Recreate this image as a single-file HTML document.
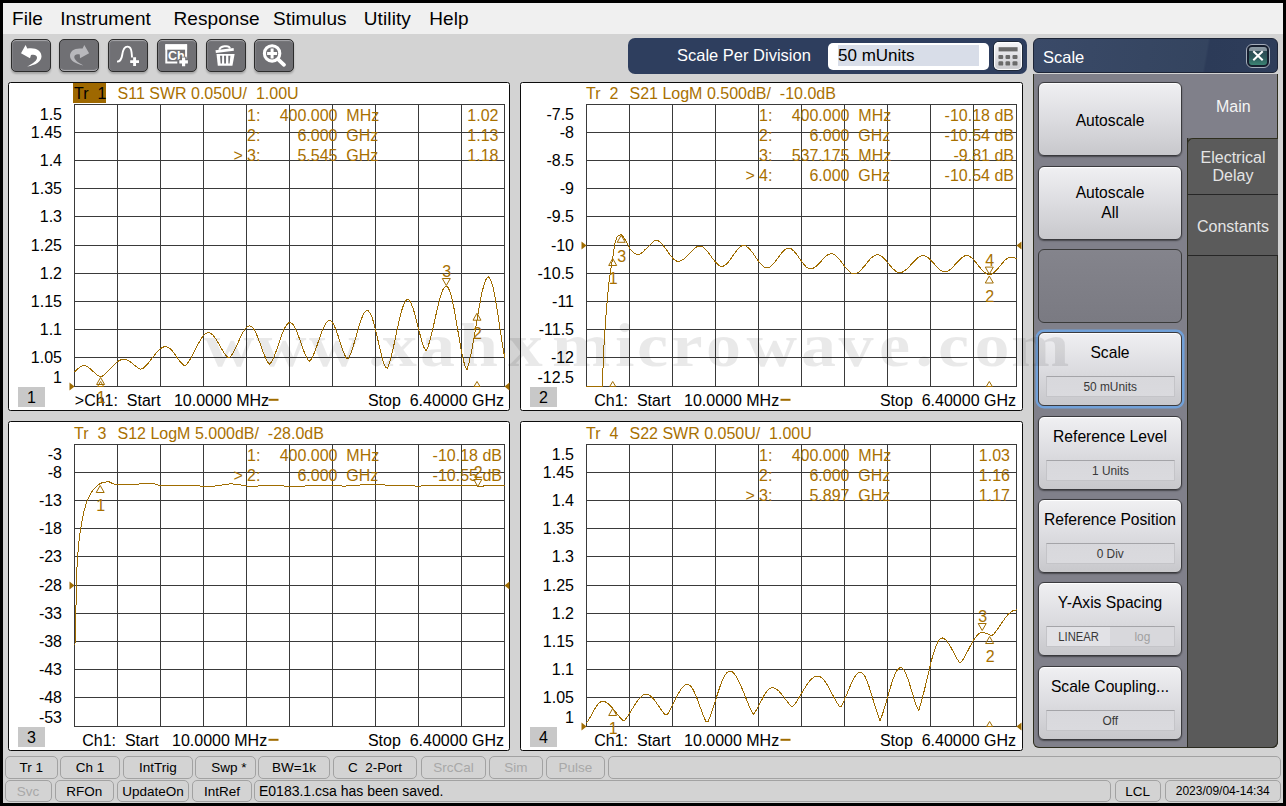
<!DOCTYPE html>
<html><head><meta charset="utf-8"><style>
*{margin:0;padding:0;box-sizing:border-box}
html,body{width:1286px;height:806px;overflow:hidden;background:#000;font-family:"Liberation Sans", sans-serif}
#app{position:absolute;left:3px;top:3px;width:1280px;height:800px;background:#d3d3d3;overflow:hidden}
#menu{position:absolute;left:0;top:0;width:1280px;height:31px;background:#f0f0f0}
#menu span{position:absolute;top:5px;font-size:19px;color:#000;letter-spacing:0.1px}
.tb{position:absolute;top:36px;width:40px;height:33px;border:1.5px solid #2c2c2c;border-radius:5px;background:#707074;box-shadow:inset 0 2px 1px -1px #a8a8ac,inset 1px 0 1px -0.5px #909094,0 2px 2px rgba(0,0,0,0.22)}
.tb.dis{box-shadow:inset 0 -2px 1px -1px #b0b0b4,0 2px 2px rgba(0,0,0,0.22)}
.tb svg{position:absolute;left:-1.5px;top:-1.5px}
svg text{font-family:"Liberation Sans", sans-serif}
.t16{font-size:16px;fill:#000}
.t16g{font-size:16px;fill:#a87000}
#spd{position:absolute;left:625px;top:35px;width:399px;height:36px;background:#2e3e5e;border-radius:7px}
#spd .lab{position:absolute;left:49px;top:8px;font-size:16.5px;color:#fff}
#spd .inp{position:absolute;left:200px;top:5px;width:161px;height:27px;background:#fff;border-radius:5px}
#spd .sel{position:absolute;left:10px;top:2px;width:141px;height:21px;background:#d8dde8;font-size:17px;color:#000;line-height:21px;padding-left:0px}
#spd .calc{position:absolute;left:366px;top:4px;width:28px;height:28px;border-radius:5px;background:linear-gradient(#f6f6f8,#dcdce0 60%,#c8c8cc);box-shadow:0 0 0 1px #1e2838,inset 0 0 1px 1px #fff}
#rp{position:absolute;left:1030px;top:35px;width:245px;height:710px}
#rp .hdr{position:absolute;left:0;top:0;width:245px;height:35px;background:linear-gradient(100deg,#3a4a68 0%,#34445f 70%,#2c3b58 71%,#2e3d5a 100%);border:1px solid #1c2436;border-radius:6px 6px 5px 5px}
#rp .hdr .t{position:absolute;left:9px;top:9px;font-size:16.5px;color:#fff}
#rp .x{position:absolute;left:212px;top:5px;width:24px;height:24px;border:1px solid #a4acba;border-radius:6px;background:#161e2e}
#rp .x .in{position:absolute;left:2px;top:2px;width:18px;height:18px;border-radius:3px;background:linear-gradient(#8c9aa4 0%,#7e8e98 24%,#2c4c54 25%,#2e5a5c 60%,#3c8474 100%)}
#rp .body{position:absolute;left:0;top:36px;width:245px;height:674px;background:#80808a;border:1px solid #2e2e1e;border-top:none;border-radius:0 0 6px 6px}
#rp .tabcol{position:absolute;left:154px;top:36px;width:91px;height:674px;background:#5a5a5a;border:1px solid #2a2a20;border-top:none;border-radius:0 0 6px 0}
#rp .main{position:absolute;left:154px;top:36px;width:91px;height:64px;background:#80808a;border-right:1px solid #2e2e1e}
#rp .tab{position:absolute;left:154px;width:91px;background:#5b5b5b;color:#e4e4e4;font-size:16px;text-align:center;border-bottom:1px solid #262626}
.rb{position:absolute;left:7px;width:144px;height:74px;border:1px solid #3a3a3e;border-radius:6px;background:linear-gradient(#f0f0f2,#dedee2 45%,#c8c8cc);box-shadow:inset 0 1px 1px #fff,0 1px 1.5px rgba(0,0,0,0.45);color:#000;text-align:center}
.rb.empty{background:linear-gradient(#84848c,#7a7a82);border-color:#3a3a3a;box-shadow:none}
.rb.focus{box-shadow:0 0 0 2.5px #70a0d8,inset 0 1px 1px #fff}
.rb .lab1{position:absolute;left:-20px;right:-20px;top:27.5px;font-size:17px;white-space:nowrap;transform:scaleX(0.92)}
.rb .lab2{position:absolute;left:0;right:0;top:16px;font-size:17px;line-height:20px;transform:scaleX(0.92)}
.rb .labt{position:absolute;left:-20px;right:-20px;top:10px;font-size:17px;white-space:nowrap;transform:scaleX(0.92)}
.rb .sub{position:absolute;left:7px;top:43px;width:129px;height:21px;border:1px solid #c4c4c8;border-top-color:#a4a4a8;background:linear-gradient(#d8d8dc,#dadade);font-size:12.5px;color:#383838;line-height:21px}
.rb .sub .tx{display:inline-block;transform:scaleX(0.95)}
.rb .sub.lin .l1{position:absolute;left:0;top:0;width:63px;height:19px;background:#e2e2e6;line-height:20px;transform:none}
.rb .sub.lin .l2{position:absolute;left:63px;top:0;width:64px;height:19px;color:#a0a0a0;background:#d8d8dc;line-height:20px}
.sb{position:absolute;border:1px solid #a2a2a2;border-radius:5px;font-size:13.5px;text-align:center;line-height:21px;color:#000;background:#d3d3d3}
.sb.dis{color:#a8a8a8}
.sb.msg{text-align:left;padding-left:4px;font-size:14px}
.sb.dt{font-size:12px}
#wm{position:absolute;left:205px;top:298px;font-family:"Liberation Serif",serif;font-weight:bold;font-size:76px;letter-spacing:1px;color:rgba(0,0,0,0.1);white-space:nowrap;pointer-events:none}
</style></head><body>
<div id="app">
<div id="menu"><span style="left:9px">File</span><span style="left:57.2px">Instrument</span><span style="left:170.4px">Response</span><span style="left:270px">Stimulus</span><span style="left:360.8px">Utility</span><span style="left:426.2px">Help</span></div>
<div class="tb" style="left:8px"><svg width="40" height="33" viewBox="0 0 40 33"><path d="M10,14.2 L14.6,6 L16.3,9.6 C24.5,8.2 30.6,11.5 30.5,17.6 C30.4,22.8 24.5,26.3 16.2,27.6 C21.8,24.6 26.2,21.8 26,18.6 C25.8,16 23,15.2 20,16.1 L19,19.2 Z" fill="#fff"/></svg></div><div class="tb dis" style="left:56px"><svg width="40" height="33" viewBox="0 0 40 33"><path d="M30.1,14.2 L25.3,6 L23.6,9.6 C15.5,8.6 11,12 11,16.8 C11,21.5 16,24.8 24.4,26.4 C18.8,23.5 15.2,20.8 15.3,18 C15.4,15.5 18,14.8 20.8,15.6 L21,19.2 Z" fill="#b8b8bc"/></svg></div><div class="tb" style="left:105px"><svg width="40" height="33" viewBox="0 0 40 33"><path d="M9,22.6 C12.5,22.6 13.6,20.5 14.2,16 C14.8,11.5 15.6,7.6 19.4,7.6 C23,7.6 23.6,11 24,18.5" stroke="#fff" stroke-width="1.9" fill="none"/><path d="M26.6,18.2 V27 M22.2,22.6 H31" stroke="#fff" stroke-width="2.9"/></svg></div><div class="tb" style="left:154px"><svg width="40" height="33" viewBox="0 0 40 33"><path d="M8.3,5.1 H30.1 V10.7 H8.3 Z" fill="#fff"/><path d="M9.3,5.5 V23.6 H20.3 M29.1,5.5 V19.4" stroke="#fff" stroke-width="2" fill="none"/><text x="11" y="20.8" style="font-family:'Liberation Sans',sans-serif;font-weight:bold;font-size:12.5px;-webkit-font-smoothing:antialiased" fill="#fff">Ch</text><path d="M26.6,17.8 V28 M21.5,22.9 H31.7" stroke="#6f6f73" stroke-width="6"/><path d="M26.6,18.6 V27.2 M22.3,22.9 H30.9" stroke="#fff" stroke-width="3.2"/></svg></div><div class="tb" style="left:202.5px"><svg width="40" height="33" viewBox="0 0 40 33"><path d="M10.5,11.3 L28.6,9.1 L28.9,11.7 L10.9,13.9 Z" fill="#fff"/><path d="M14.4,10.8 C14.8,7.2 24,5.6 25,9.4" stroke="#fff" stroke-width="2" fill="none"/><path d="M11.5,15.1 H29.6 L27.4,26.8 H12.8 Z" fill="#fff"/><path d="M15,16.8 H17.2 L17,24.6 H15.6 Z M19,16.8 H21.1 L21,24.6 H19.2 Z M23.3,16.8 H25.4 L24.6,24.6 H23.4 Z" fill="#6f6f73"/></svg></div><div class="tb" style="left:251px"><svg width="40" height="33" viewBox="0 0 40 33"><circle cx="18.1" cy="14.4" r="7.7" fill="none" stroke="#fff" stroke-width="3.1"/><path d="M18.1,9.4 V19.4 M13.1,14.4 H23.1" stroke="#fff" stroke-width="3"/><path d="M24.4,20.6 L30,25.8" stroke="#fff" stroke-width="3.8" stroke-linecap="round"/></svg></div>
<div id="spd"><div class="lab">Scale Per Division</div><div class="inp"><div class="sel">50 mUnits</div></div><div class="calc"><svg width="28" height="28" viewBox="0 0 28 28"><rect x="4.6" y="5.2" width="19" height="4.2" fill="#6a6a6a"/><g fill="#6a6a6a"><rect x="4.4" y="13.1" width="4.8" height="3.9" rx="1"/><rect x="11.5" y="13.1" width="4.6" height="3.9" rx="1"/><rect x="18.5" y="13.1" width="5" height="3.9" rx="1"/><rect x="4.4" y="19.2" width="4.8" height="4.4" rx="1.2"/><rect x="11.5" y="19.2" width="4.6" height="4.4" rx="1.2"/><rect x="18.5" y="19.2" width="5" height="4.4" rx="1.2"/></g></svg></div></div>
<div id="rp">
<div class="body"></div>
<div class="tabcol"></div>
<div class="main"></div>
<div class="tab" style="top:100px;height:57px;border-radius:6px 0 0 0;border-left:1px solid #2e2e1e;border-top:1px solid #2e2e1e;padding-top:10px;line-height:18px">Electrical<br>Delay</div>
<div class="tab" style="top:157px;height:61px;line-height:64px;border-left:1px solid #2e2e1e">Constants</div>
<div class="hdr"><div class="t">Scale</div><div class="x"><div class="in"><svg width="18" height="18" viewBox="0 0 18 18" style="position:absolute;left:0;top:0"><path d="M4.3,4.3 L13.7,13.3 M13.7,4.3 L4.3,13.3" stroke="#fff" stroke-width="2"/></svg></div></div></div>
<div style="position:absolute;left:1186px;top:68px;font-size:16px;color:#f4f4f4"></div>
</div>
<div style="position:absolute;left:1213px;top:95px;font-size:16px;color:#f4f4f4">Main</div>
<div style="position:absolute;left:0;top:0" id="btnwrap">
</div>
<div class="sb" style="left:2px;top:753px;width:52.6px;height:23px">Tr 1</div>
<div class="sb" style="left:57px;top:753px;width:60px;height:23px">Ch 1</div>
<div class="sb" style="left:120px;top:753px;width:69.6px;height:23px">IntTrig</div>
<div class="sb" style="left:192px;top:753px;width:60.5px;height:23px">&nbsp; Swp *</div>
<div class="sb" style="left:255px;top:753px;width:72px;height:23px">BW=1k</div>
<div class="sb" style="left:330px;top:753px;width:84px;height:23px">C&nbsp; 2-Port</div>
<div class="sb dis" style="left:417.7px;top:753px;width:65.69999999999999px;height:23px">SrcCal</div>
<div class="sb dis" style="left:486px;top:753px;width:53.60000000000002px;height:23px">Sim</div>
<div class="sb dis" style="left:542.6px;top:753px;width:59.69999999999993px;height:23px">Pulse</div>
<div class="sb" style="left:605px;top:753px;width:673.3px;height:23px"></div>
<div class="sb dis" style="left:1.5px;top:777px;width:47.0px;height:22px">Svc</div>
<div class="sb" style="left:51.6px;top:777px;width:59.4px;height:22px">RFOn</div>
<div class="sb" style="left:114px;top:777px;width:72px;height:22px">UpdateOn</div>
<div class="sb" style="left:189px;top:777px;width:60px;height:22px">IntRef</div>
<div class="sb msg" style="left:251px;top:777px;width:857px;height:22px">E0183.1.csa has been saved.</div>
<div class="sb" style="left:1111.5px;top:777px;width:46.5px;height:22px">LCL</div>
<div class="sb dt" style="left:1161.5px;top:777px;width:116.5px;height:22px">2023/09/04-14:34</div>
</div>
<svg style="position:absolute;left:0;top:0" width="1286" height="806" viewBox="0 0 1286 806">
<rect x="8.5" y="82.5" width="501" height="328" rx="2" fill="#fff" stroke="#0c0c0c" stroke-width="1"/>
<path d="M74.5,104 V387 M117.5,104 V387 M160.5,104 V387 M203.5,104 V387 M246.5,104 V387 M289.5,104 V387 M332.5,104 V387 M375.5,104 V387 M418.5,104 V387 M461.5,104 V387 M504.5,104 V387 M74,104.5 H505 M74,132.5 H505 M74,160.5 H505 M74,188.5 H505 M74,216.5 H505 M74,245.5 H505 M74,273.5 H505 M74,301.5 H505 M74,329.5 H505 M74,357.5 H505 M74,386.5 H505" stroke="#3a3a3a" stroke-width="1" fill="none"/>
<text x="62" y="119.8" text-anchor="end" class="t16">1.5</text>
<text x="62" y="137.5" text-anchor="end" class="t16">1.45</text>
<text x="62" y="165.5" text-anchor="end" class="t16">1.4</text>
<text x="62" y="193.5" text-anchor="end" class="t16">1.35</text>
<text x="62" y="221.5" text-anchor="end" class="t16">1.3</text>
<text x="62" y="250.5" text-anchor="end" class="t16">1.25</text>
<text x="62" y="278.5" text-anchor="end" class="t16">1.2</text>
<text x="62" y="306.5" text-anchor="end" class="t16">1.15</text>
<text x="62" y="334.5" text-anchor="end" class="t16">1.1</text>
<text x="62" y="362.5" text-anchor="end" class="t16">1.05</text>
<text x="62" y="382.8" text-anchor="end" class="t16">1</text>
<rect x="73" y="83" width="33" height="20" fill="#9e6800"/>
<text x="74" y="99" class="t16" fill="#000" xml:space="preserve">Tr  1</text>
<text x="117.5" y="99" class="t16g" xml:space="preserve">S11 SWR 0.050U/  1.00U</text>
<text x="247" y="120.5" class="t16g">1:</text>
<text x="337.5" y="120.5" text-anchor="end" class="t16g">400.000</text>
<text x="346.3" y="120.5" class="t16g">MHz</text>
<text x="498.5" y="120.5" text-anchor="end" class="t16g" xml:space="preserve">1.02</text>
<text x="247" y="140.5" class="t16g">2:</text>
<text x="337.5" y="140.5" text-anchor="end" class="t16g">6.000</text>
<text x="346.3" y="140.5" class="t16g">GHz</text>
<text x="498.5" y="140.5" text-anchor="end" class="t16g" xml:space="preserve">1.13</text>
<text x="233.5" y="160.5" class="t16g">&gt;</text>
<text x="247" y="160.5" class="t16g">3:</text>
<text x="337.5" y="160.5" text-anchor="end" class="t16g">5.545</text>
<text x="346.3" y="160.5" class="t16g">GHz</text>
<text x="498.5" y="160.5" text-anchor="end" class="t16g" xml:space="preserve">1.18</text>
<text x="74.8" y="405.6" class="t16" xml:space="preserve">&gt;Ch1:  Start   10.0000 MHz</text>
<rect x="268.5" y="398.8" width="10" height="2" fill="#a06c00"/>
<text x="504" y="405.6" text-anchor="end" class="t16" xml:space="preserve">Stop  6.40000 GHz</text>
<rect x="18" y="387" width="27" height="20" fill="#c8c8c8"/>
<text x="31.5" y="403" text-anchor="middle" class="t16">1</text>
<clipPath id="c1"><rect x="74" y="104" width="431" height="283"/></clipPath>
<path d="M73.5,372.3 L75.7,370.9 L77.8,368.9 L80.0,367.0 L82.1,365.8 L84.3,365.5 L86.4,366.2 L88.6,367.4 L90.7,369.2 L92.9,371.2 L95.0,373.2 L97.2,375.0 L99.3,376.4 L101.5,376.6 L103.6,375.3 L105.8,373.5 L107.9,371.4 L110.1,369.1 L112.2,366.8 L114.4,364.5 L116.5,362.5 L118.7,360.9 L120.8,359.8 L123.0,359.2 L125.1,359.3 L127.3,360.0 L129.4,361.3 L131.6,362.9 L133.7,364.6 L135.9,366.4 L138.0,367.9 L140.2,369.1 L142.3,368.9 L144.5,367.2 L146.6,365.1 L148.8,362.5 L150.9,359.8 L153.1,356.9 L155.2,354.1 L157.4,351.6 L159.5,349.5 L161.7,347.8 L163.8,346.9 L166.0,346.6 L168.1,347.2 L170.3,348.8 L172.4,351.1 L174.6,353.9 L176.7,357.0 L178.9,360.0 L181.0,362.7 L183.2,364.9 L185.3,365.6 L187.5,363.3 L189.6,360.2 L191.8,356.5 L193.9,352.3 L196.1,348.0 L198.2,343.8 L200.4,340.0 L202.5,336.8 L204.7,334.4 L206.8,333.0 L209.0,332.7 L211.1,333.6 L213.3,335.5 L215.4,338.3 L217.6,341.8 L219.7,345.6 L221.9,349.4 L224.0,352.9 L226.2,355.9 L228.3,358.0 L230.5,356.9 L232.6,353.7 L234.8,349.7 L236.9,345.1 L239.1,340.3 L241.2,335.7 L243.4,331.6 L245.5,328.4 L247.7,326.4 L249.8,325.8 L252.0,326.8 L254.1,329.5 L256.3,333.8 L258.4,339.1 L260.6,344.9 L262.7,350.9 L264.9,356.3 L267.0,360.9 L269.2,364.2 L271.3,362.3 L273.5,358.0 L275.6,352.6 L277.8,346.4 L279.9,340.0 L282.1,334.0 L284.2,328.8 L286.4,325.0 L288.5,322.8 L290.7,322.5 L292.8,324.2 L295.0,327.6 L297.1,332.4 L299.3,338.2 L301.4,344.4 L303.6,350.4 L305.7,355.7 L307.9,359.9 L310.0,361.3 L312.2,357.7 L314.3,352.8 L316.5,347.1 L318.6,340.8 L320.8,334.6 L322.9,329.0 L325.1,324.5 L327.2,321.6 L329.4,320.4 L331.5,321.3 L333.7,324.4 L335.8,329.3 L338.0,335.5 L340.1,342.2 L342.3,348.8 L344.4,354.4 L346.6,358.7 L348.7,358.1 L350.9,353.2 L353.0,346.9 L355.2,339.6 L357.3,332.0 L359.5,324.6 L361.6,318.3 L363.8,313.6 L365.9,310.9 L368.1,310.6 L370.2,313.1 L372.4,318.3 L374.5,325.7 L376.7,334.6 L378.8,344.0 L381.0,353.1 L383.1,361.1 L385.3,367.2 L387.4,368.4 L389.6,362.4 L391.7,354.5 L393.9,345.1 L396.0,334.9 L398.2,324.7 L400.3,315.4 L402.5,307.8 L404.6,302.4 L406.8,299.7 L408.9,300.0 L411.1,303.2 L413.2,308.8 L415.4,316.3 L417.5,324.8 L419.7,333.4 L421.8,341.2 L424.0,347.5 L426.1,351.1 L428.3,346.0 L430.4,338.8 L432.6,330.0 L434.7,320.4 L436.9,310.6 L439.0,301.6 L441.2,294.1 L443.3,288.8 L445.5,286.2 L447.6,286.7 L449.8,290.9 L451.9,298.5 L454.1,308.9 L456.2,321.0 L458.4,333.8 L460.5,346.2 L462.7,357.1 L464.8,365.7 L467.0,369.5 L469.1,362.4 L471.3,352.9 L473.4,341.3 L475.6,328.6 L477.7,315.5 L479.9,303.1 L482.0,292.3 L484.2,284.0 L486.3,278.7 L488.5,277.0 L490.6,279.4 L492.8,286.0 L494.9,296.3 L497.1,309.2 L499.2,323.5 L501.4,337.9 L503.5,351.0 L505.7,361.8" clip-path="url(#c1)" stroke="#a06c00" stroke-width="1" fill="none" shape-rendering="crispEdges"/>
<path d="M100.6,377.5 L104.6,384.5 L96.6,384.5 Z" fill="none" stroke="#a06c00" stroke-width="1"/>
<text x="101.1" y="403" text-anchor="middle" class="t16g">1</text>
<path d="M446.3,285.5 L450.3,278.5 L442.3,278.5 Z" fill="none" stroke="#a06c00" stroke-width="1"/>
<text x="446.8" y="277" text-anchor="middle" class="t16g">3</text>
<path d="M477,313.2 L481,320.2 L473,320.2 Z" fill="none" stroke="#a06c00" stroke-width="1"/>
<text x="477.5" y="338.7" text-anchor="middle" class="t16g">2</text>
<path d="M100.6,381.5 L103.6,386.5 L97.6,386.5 Z" fill="none" stroke="#a06c00" stroke-width="1"/>
<path d="M477,381.5 L480,386.5 L474,386.5 Z" fill="none" stroke="#a06c00" stroke-width="1"/>
<path d="M74.5,386.5 L69.5,382.5 L69.5,390.5 Z" fill="#a06c00"/>
<path d="M504.5,386.5 L509.5,382.5 L509.5,390.5 Z" fill="#a06c00"/>
<rect x="520.5" y="82.5" width="502" height="328" rx="2" fill="#fff" stroke="#0c0c0c" stroke-width="1"/>
<path d="M586.5,104 V387 M629.5,104 V387 M672.5,104 V387 M715.5,104 V387 M758.5,104 V387 M801.5,104 V387 M844.5,104 V387 M887.5,104 V387 M930.5,104 V387 M973.5,104 V387 M1016.5,104 V387 M586,104.5 H1017 M586,132.5 H1017 M586,160.5 H1017 M586,188.5 H1017 M586,216.5 H1017 M586,245.5 H1017 M586,273.5 H1017 M586,301.5 H1017 M586,329.5 H1017 M586,357.5 H1017 M586,386.5 H1017" stroke="#3a3a3a" stroke-width="1" fill="none"/>
<text x="574" y="119.8" text-anchor="end" class="t16">-7.5</text>
<text x="574" y="137.5" text-anchor="end" class="t16">-8</text>
<text x="574" y="165.5" text-anchor="end" class="t16">-8.5</text>
<text x="574" y="193.5" text-anchor="end" class="t16">-9</text>
<text x="574" y="221.5" text-anchor="end" class="t16">-9.5</text>
<text x="574" y="250.5" text-anchor="end" class="t16">-10</text>
<text x="574" y="278.5" text-anchor="end" class="t16">-10.5</text>
<text x="574" y="306.5" text-anchor="end" class="t16">-11</text>
<text x="574" y="334.5" text-anchor="end" class="t16">-11.5</text>
<text x="574" y="362.5" text-anchor="end" class="t16">-12</text>
<text x="574" y="382.8" text-anchor="end" class="t16">-12.5</text>
<text x="586" y="99" class="t16g" xml:space="preserve">Tr  2</text>
<text x="629.5" y="99" class="t16g" xml:space="preserve">S21 LogM 0.500dB/  -10.0dB</text>
<text x="759" y="120.5" class="t16g">1:</text>
<text x="849.5" y="120.5" text-anchor="end" class="t16g">400.000</text>
<text x="858.3" y="120.5" class="t16g">MHz</text>
<text x="1014" y="120.5" text-anchor="end" class="t16g" xml:space="preserve">-10.18 dB</text>
<text x="759" y="140.5" class="t16g">2:</text>
<text x="849.5" y="140.5" text-anchor="end" class="t16g">6.000</text>
<text x="858.3" y="140.5" class="t16g">GHz</text>
<text x="1014" y="140.5" text-anchor="end" class="t16g" xml:space="preserve">-10.54 dB</text>
<text x="759" y="160.5" class="t16g">3:</text>
<text x="849.5" y="160.5" text-anchor="end" class="t16g">537.175</text>
<text x="858.3" y="160.5" class="t16g">MHz</text>
<text x="1014" y="160.5" text-anchor="end" class="t16g" xml:space="preserve">-9.81 dB</text>
<text x="745.5" y="180.5" class="t16g">&gt;</text>
<text x="759" y="180.5" class="t16g">4:</text>
<text x="849.5" y="180.5" text-anchor="end" class="t16g">6.000</text>
<text x="858.3" y="180.5" class="t16g">GHz</text>
<text x="1014" y="180.5" text-anchor="end" class="t16g" xml:space="preserve">-10.54 dB</text>
<text x="594.2" y="405.6" class="t16" xml:space="preserve">Ch1:  Start   10.0000 MHz</text>
<rect x="780.5" y="398.8" width="10" height="2" fill="#a06c00"/>
<text x="1016" y="405.6" text-anchor="end" class="t16" xml:space="preserve">Stop  6.40000 GHz</text>
<rect x="530" y="387" width="27" height="20" fill="#c8c8c8"/>
<text x="543.5" y="403" text-anchor="middle" class="t16">2</text>
<clipPath id="c2"><rect x="586" y="104" width="431" height="283"/></clipPath>
<path d="M585.0,386.0 L587.1,386.0 L589.3,386.0 L591.4,386.0 L593.6,386.0 L595.7,386.0 L597.9,386.0 L600.0,386.0 L602.2,386.0 L604.3,338.2 L606.5,308.9 L608.6,285.5 L610.8,268.9 L612.9,256.3 L615.1,242.1 L617.2,236.6 L619.4,235.1 L621.5,234.9 L623.7,237.3 L625.8,240.7 L628.0,244.9 L630.1,248.8 L632.3,251.2 L634.4,253.2 L636.6,254.5 L638.7,254.7 L640.9,253.6 L643.0,251.8 L645.2,249.5 L647.3,247.5 L649.5,245.5 L651.6,243.2 L653.8,241.2 L655.9,240.3 L658.1,240.7 L660.2,242.2 L662.4,244.4 L664.5,247.1 L666.7,250.1 L668.8,253.2 L671.0,256.1 L673.1,258.6 L675.3,260.4 L677.4,261.4 L679.6,261.3 L681.7,260.4 L683.9,258.9 L686.0,257.0 L688.2,254.8 L690.3,252.5 L692.5,250.3 L694.6,248.4 L696.8,246.9 L698.9,246.1 L701.1,246.1 L703.2,247.2 L705.4,249.1 L707.5,251.6 L709.7,254.4 L711.8,257.4 L714.0,260.3 L716.1,262.8 L718.3,264.9 L720.4,266.1 L722.6,266.4 L724.7,265.5 L726.9,263.7 L729.0,261.2 L731.2,258.3 L733.3,255.2 L735.5,252.1 L737.6,249.4 L739.8,247.2 L741.9,245.8 L744.1,245.4 L746.2,246.2 L748.4,247.8 L750.5,250.1 L752.7,252.9 L754.8,256.0 L757.0,259.1 L759.1,262.0 L761.3,264.6 L763.4,266.6 L765.6,267.8 L767.7,267.9 L769.9,267.0 L772.0,265.3 L774.2,262.9 L776.3,260.1 L778.5,257.1 L780.6,254.2 L782.8,251.6 L784.9,249.6 L787.1,248.3 L789.2,248.0 L791.4,248.9 L793.5,250.7 L795.7,253.1 L797.8,256.0 L800.0,259.1 L802.1,262.1 L804.3,264.9 L806.4,267.1 L808.6,268.5 L810.7,269.0 L812.9,268.4 L815.0,267.1 L817.2,265.3 L819.3,263.1 L821.5,260.8 L823.6,258.4 L825.8,256.4 L827.9,254.8 L830.1,253.8 L832.2,253.7 L834.4,254.5 L836.5,256.2 L838.7,258.5 L840.8,261.1 L843.0,264.0 L845.1,266.9 L847.3,269.5 L849.4,271.7 L851.6,273.3 L853.7,274.0 L855.9,273.7 L858.0,272.6 L860.2,270.8 L862.3,268.5 L864.5,266.0 L866.6,263.3 L868.8,260.7 L870.9,258.3 L873.1,256.4 L875.2,255.2 L877.4,254.7 L879.5,255.2 L881.7,256.4 L883.8,258.3 L886.0,260.6 L888.1,263.2 L890.3,265.7 L892.4,268.2 L894.6,270.2 L896.7,271.8 L898.9,272.6 L901.0,272.6 L903.2,271.7 L905.3,270.3 L907.5,268.4 L909.6,266.2 L911.8,263.8 L913.9,261.5 L916.1,259.4 L918.2,257.5 L920.4,256.2 L922.5,255.6 L924.7,255.7 L926.8,256.7 L929.0,258.3 L931.1,260.4 L933.3,262.8 L935.4,265.2 L937.6,267.6 L939.7,269.6 L941.9,271.1 L944.0,271.9 L946.2,271.9 L948.3,270.9 L950.5,269.4 L952.6,267.3 L954.8,264.9 L956.9,262.5 L959.1,260.2 L961.2,258.1 L963.4,256.5 L965.5,255.6 L967.7,255.6 L969.8,256.5 L972.0,258.2 L974.1,260.4 L976.3,262.9 L978.4,265.6 L980.6,268.3 L982.7,270.7 L984.9,272.7 L987.0,274.1 L989.2,274.6 L991.3,274.2 L993.5,272.9 L995.6,271.0 L997.8,268.6 L999.9,266.0 L1002.1,263.5 L1004.2,261.0 L1006.4,259.0 L1008.5,257.6 L1010.7,257.0 L1012.8,257.2 L1015.0,257.9 L1017.1,259.1" clip-path="url(#c2)" stroke="#a06c00" stroke-width="1" fill="none" shape-rendering="crispEdges"/>
<path d="M612.7,258.5 L616.7,265.5 L608.7,265.5 Z" fill="none" stroke="#a06c00" stroke-width="1"/>
<text x="613.2" y="284" text-anchor="middle" class="t16g">1</text>
<path d="M621.2,235.3 L625.2,242.3 L617.2,242.3 Z" fill="none" stroke="#a06c00" stroke-width="1"/>
<text x="617.2" y="261.8" class="t16g">3</text>
<path d="M989.3,274.1 L993.3,267.1 L985.3,267.1 Z" fill="none" stroke="#a06c00" stroke-width="1"/>
<text x="989.8" y="265.6" text-anchor="middle" class="t16g">4</text>
<path d="M989.3,276.0 L993.3,283.0 L985.3,283.0 Z" fill="none" stroke="#a06c00" stroke-width="1"/>
<text x="989.8" y="301.5" text-anchor="middle" class="t16g">2</text>
<path d="M612.7,381.5 L615.7,386.5 L609.7,386.5 Z" fill="none" stroke="#a06c00" stroke-width="1"/>
<path d="M989.3,381.5 L992.3,386.5 L986.3,386.5 Z" fill="none" stroke="#a06c00" stroke-width="1"/>
<path d="M586.5,245.5 L581.5,241.5 L581.5,249.5 Z" fill="#a06c00"/>
<path d="M1016.5,245.5 L1021.5,241.5 L1021.5,249.5 Z" fill="#a06c00"/>
<rect x="8.5" y="421.5" width="501" height="329" rx="2" fill="#fff" stroke="#0c0c0c" stroke-width="1"/>
<path d="M74.5,444 V727 M117.5,444 V727 M160.5,444 V727 M203.5,444 V727 M246.5,444 V727 M289.5,444 V727 M332.5,444 V727 M375.5,444 V727 M418.5,444 V727 M461.5,444 V727 M504.5,444 V727 M74,444.5 H505 M74,472.5 H505 M74,500.5 H505 M74,528.5 H505 M74,556.5 H505 M74,585.5 H505 M74,613.5 H505 M74,641.5 H505 M74,669.5 H505 M74,697.5 H505 M74,726.5 H505" stroke="#3a3a3a" stroke-width="1" fill="none"/>
<text x="62" y="459.8" text-anchor="end" class="t16">-3</text>
<text x="62" y="477.5" text-anchor="end" class="t16">-8</text>
<text x="62" y="505.5" text-anchor="end" class="t16">-13</text>
<text x="62" y="533.5" text-anchor="end" class="t16">-18</text>
<text x="62" y="561.5" text-anchor="end" class="t16">-23</text>
<text x="62" y="590.5" text-anchor="end" class="t16">-28</text>
<text x="62" y="618.5" text-anchor="end" class="t16">-33</text>
<text x="62" y="646.5" text-anchor="end" class="t16">-38</text>
<text x="62" y="674.5" text-anchor="end" class="t16">-43</text>
<text x="62" y="702.5" text-anchor="end" class="t16">-48</text>
<text x="62" y="722.8" text-anchor="end" class="t16">-53</text>
<text x="74" y="439" class="t16g" xml:space="preserve">Tr  3</text>
<text x="117.5" y="439" class="t16g" xml:space="preserve">S12 LogM 5.000dB/  -28.0dB</text>
<text x="247" y="460.5" class="t16g">1:</text>
<text x="337.5" y="460.5" text-anchor="end" class="t16g">400.000</text>
<text x="346.3" y="460.5" class="t16g">MHz</text>
<text x="502" y="460.5" text-anchor="end" class="t16g" xml:space="preserve">-10.18 dB</text>
<text x="233.5" y="480.5" class="t16g">&gt;</text>
<text x="247" y="480.5" class="t16g">2:</text>
<text x="337.5" y="480.5" text-anchor="end" class="t16g">6.000</text>
<text x="346.3" y="480.5" class="t16g">GHz</text>
<text x="502" y="480.5" text-anchor="end" class="t16g" xml:space="preserve">-10.55 dB</text>
<text x="82.2" y="745.6" class="t16" xml:space="preserve">Ch1:  Start   10.0000 MHz</text>
<rect x="268.5" y="738.8000000000001" width="10" height="2" fill="#a06c00"/>
<text x="504" y="745.6" text-anchor="end" class="t16" xml:space="preserve">Stop  6.40000 GHz</text>
<rect x="18" y="727" width="27" height="20" fill="#c8c8c8"/>
<text x="31.5" y="743" text-anchor="middle" class="t16">3</text>
<clipPath id="c3"><rect x="74" y="444" width="431" height="283"/></clipPath>
<path d="M75.4,644.4 L75.0,644.4 L77.2,560.4 L79.3,537.8 L81.5,523.4 L83.6,512.9 L85.8,504.7 L87.9,498.9 L90.1,494.5 L92.2,491.1 L94.4,488.6 L96.5,486.3 L98.7,484.4 L100.8,483.2 L103.0,482.6 L105.1,482.1 L107.3,481.8 L109.4,482.0 L111.6,483.0 L113.7,483.9 L115.9,484.4 L118.0,484.4 L120.2,484.4 L122.3,484.4 L124.5,484.4 L126.6,484.4 L128.8,484.4 L130.9,484.4 L133.1,484.3 L135.2,484.3 L137.4,484.1 L139.5,484.0 L141.7,483.9 L143.8,483.7 L146.0,483.6 L148.1,483.5 L150.3,483.4 L152.4,483.4 L154.6,483.9 L156.7,484.6 L158.9,485.3 L161.0,485.5 L163.2,485.5 L165.3,485.4 L167.5,485.4 L169.6,485.3 L171.8,485.3 L173.9,485.2 L176.1,485.2 L178.2,485.1 L180.4,485.0 L182.5,485.0 L184.7,485.0 L186.8,485.0 L189.0,485.1 L191.1,485.3 L193.3,485.4 L195.4,485.6 L197.6,485.8 L199.7,486.0 L201.9,486.2 L204.0,486.3 L206.2,486.3 L208.3,486.3 L210.5,486.2 L212.6,486.1 L214.8,486.0 L216.9,485.8 L219.1,485.5 L221.2,485.2 L223.4,484.7 L225.5,484.4 L227.7,484.1 L229.8,483.9 L232.0,483.9 L234.1,484.1 L236.3,484.4 L238.4,484.7 L240.6,485.0 L242.7,485.4 L244.9,485.7 L247.0,486.0 L249.2,486.3 L251.3,486.3 L253.5,486.2 L255.6,486.2 L257.8,486.0 L259.9,485.9 L262.1,485.8 L264.2,485.7 L266.4,485.6 L268.5,485.5 L270.7,485.5 L272.8,485.5 L275.0,485.6 L277.1,485.7 L279.3,485.8 L281.4,485.9 L283.6,486.0 L285.7,486.1 L287.9,486.2 L290.0,486.3 L292.2,486.3 L294.3,486.3 L296.5,486.3 L298.6,486.2 L300.8,486.1 L302.9,486.0 L305.1,486.0 L307.2,485.9 L309.4,485.8 L311.5,485.7 L313.7,485.6 L315.8,485.6 L318.0,485.5 L320.1,485.5 L322.3,485.5 L324.4,485.5 L326.6,485.6 L328.7,485.6 L330.9,485.7 L333.0,485.8 L335.2,485.8 L337.3,485.9 L339.5,485.9 L341.6,486.0 L343.8,486.0 L345.9,486.0 L348.1,485.9 L350.2,485.8 L352.4,485.7 L354.5,485.5 L356.7,485.3 L358.8,485.1 L361.0,484.9 L363.1,484.8 L365.3,484.6 L367.4,484.5 L369.6,484.5 L371.7,484.5 L373.9,484.6 L376.0,484.6 L378.2,484.7 L380.3,484.8 L382.5,484.9 L384.6,485.0 L386.8,485.1 L388.9,485.3 L391.1,485.4 L393.2,485.4 L395.4,485.5 L397.5,485.6 L399.7,485.6 L401.8,485.7 L404.0,485.7 L406.1,485.8 L408.3,485.9 L410.4,485.9 L412.6,485.9 L414.7,486.0 L416.9,486.0 L419.0,486.0 L421.2,486.0 L423.3,485.9 L425.5,485.8 L427.6,485.7 L429.8,485.5 L431.9,485.4 L434.1,485.2 L436.2,485.1 L438.4,485.0 L440.5,485.0 L442.7,485.0 L444.8,485.1 L447.0,485.1 L449.1,485.2 L451.3,485.2 L453.4,485.3 L455.6,485.4 L457.7,485.4 L459.9,485.5 L462.0,485.6 L464.2,485.6 L466.3,485.7 L468.5,485.8 L470.6,485.8 L472.8,485.9 L474.9,485.9 L477.1,486.0 L479.2,486.0 L481.4,486.0 L483.5,486.0 L485.7,485.9 L487.8,485.9 L490.0,485.8 L492.1,485.7 L494.3,485.7 L496.4,485.6 L498.6,485.6 L500.7,485.5 L502.9,485.5 L505.0,485.5 L507.2,485.5" clip-path="url(#c3)" stroke="#a06c00" stroke-width="1" fill="none" shape-rendering="crispEdges"/>
<path d="M100.2,485.5 L104.2,492.5 L96.2,492.5 Z" fill="none" stroke="#a06c00" stroke-width="1"/>
<text x="100.7" y="511" text-anchor="middle" class="t16g">1</text>
<path d="M477.8,486.5 L481.8,479.5 L473.8,479.5 Z" fill="none" stroke="#a06c00" stroke-width="1"/>
<text x="478.3" y="478" text-anchor="middle" class="t16g">2</text>
<path d="M74.5,585.5 L69.5,581.5 L69.5,589.5 Z" fill="#a06c00"/>
<path d="M504.5,585.5 L509.5,581.5 L509.5,589.5 Z" fill="#a06c00"/>
<rect x="520.5" y="421.5" width="502" height="329" rx="2" fill="#fff" stroke="#0c0c0c" stroke-width="1"/>
<path d="M586.5,444 V727 M629.5,444 V727 M672.5,444 V727 M715.5,444 V727 M758.5,444 V727 M801.5,444 V727 M844.5,444 V727 M887.5,444 V727 M930.5,444 V727 M973.5,444 V727 M1016.5,444 V727 M586,444.5 H1017 M586,472.5 H1017 M586,500.5 H1017 M586,528.5 H1017 M586,556.5 H1017 M586,585.5 H1017 M586,613.5 H1017 M586,641.5 H1017 M586,669.5 H1017 M586,697.5 H1017 M586,726.5 H1017" stroke="#3a3a3a" stroke-width="1" fill="none"/>
<text x="574" y="459.8" text-anchor="end" class="t16">1.5</text>
<text x="574" y="477.5" text-anchor="end" class="t16">1.45</text>
<text x="574" y="505.5" text-anchor="end" class="t16">1.4</text>
<text x="574" y="533.5" text-anchor="end" class="t16">1.35</text>
<text x="574" y="561.5" text-anchor="end" class="t16">1.3</text>
<text x="574" y="590.5" text-anchor="end" class="t16">1.25</text>
<text x="574" y="618.5" text-anchor="end" class="t16">1.2</text>
<text x="574" y="646.5" text-anchor="end" class="t16">1.15</text>
<text x="574" y="674.5" text-anchor="end" class="t16">1.1</text>
<text x="574" y="702.5" text-anchor="end" class="t16">1.05</text>
<text x="574" y="722.8" text-anchor="end" class="t16">1</text>
<text x="586" y="439" class="t16g" xml:space="preserve">Tr  4</text>
<text x="629.5" y="439" class="t16g" xml:space="preserve">S22 SWR 0.050U/  1.00U</text>
<text x="759" y="460.5" class="t16g">1:</text>
<text x="849.5" y="460.5" text-anchor="end" class="t16g">400.000</text>
<text x="858.3" y="460.5" class="t16g">MHz</text>
<text x="1010" y="460.5" text-anchor="end" class="t16g" xml:space="preserve">1.03</text>
<text x="759" y="480.5" class="t16g">2:</text>
<text x="849.5" y="480.5" text-anchor="end" class="t16g">6.000</text>
<text x="858.3" y="480.5" class="t16g">GHz</text>
<text x="1010" y="480.5" text-anchor="end" class="t16g" xml:space="preserve">1.16</text>
<text x="745.5" y="500.5" class="t16g">&gt;</text>
<text x="759" y="500.5" class="t16g">3:</text>
<text x="849.5" y="500.5" text-anchor="end" class="t16g">5.897</text>
<text x="858.3" y="500.5" class="t16g">GHz</text>
<text x="1010" y="500.5" text-anchor="end" class="t16g" xml:space="preserve">1.17</text>
<text x="594.2" y="745.6" class="t16" xml:space="preserve">Ch1:  Start   10.0000 MHz</text>
<rect x="780.5" y="738.8000000000001" width="10" height="2" fill="#a06c00"/>
<text x="1016" y="745.6" text-anchor="end" class="t16" xml:space="preserve">Stop  6.40000 GHz</text>
<rect x="530" y="727" width="27" height="20" fill="#c8c8c8"/>
<text x="543.5" y="743" text-anchor="middle" class="t16">4</text>
<clipPath id="c4"><rect x="586" y="444" width="431" height="283"/></clipPath>
<path d="M585.5,723.6 L587.6,721.4 L589.8,718.0 L591.9,714.2 L594.1,710.2 L596.2,706.6 L598.4,703.8 L600.5,701.9 L602.7,701.3 L604.8,701.7 L607.0,702.8 L609.1,704.4 L611.3,706.6 L613.4,709.2 L615.6,711.9 L617.7,714.7 L619.9,717.3 L622.0,719.7 L624.2,720.9 L626.3,718.2 L628.5,715.0 L630.6,711.6 L632.8,708.0 L634.9,704.6 L637.1,701.3 L639.2,698.6 L641.4,696.4 L643.5,694.9 L645.7,694.3 L647.8,694.6 L650.0,695.6 L652.1,697.5 L654.3,699.9 L656.4,702.8 L658.6,706.0 L660.7,709.1 L662.9,712.1 L665.0,714.8 L667.2,714.9 L669.3,711.3 L671.5,707.2 L673.6,702.9 L675.8,698.5 L677.9,694.3 L680.1,690.6 L682.2,687.6 L684.4,685.5 L686.5,684.4 L688.7,684.6 L690.8,686.3 L693.0,689.5 L695.1,693.9 L697.3,699.2 L699.4,705.0 L701.6,710.9 L703.7,716.6 L705.9,721.6 L708.0,721.8 L710.2,716.3 L712.3,710.1 L714.5,703.5 L716.6,696.7 L718.8,690.1 L720.9,684.0 L723.1,678.8 L725.2,674.8 L727.4,672.2 L729.5,671.1 L731.7,671.5 L733.8,673.2 L736.0,676.0 L738.1,679.8 L740.3,684.3 L742.4,689.4 L744.6,694.8 L746.7,700.2 L748.9,705.4 L751.0,710.2 L753.2,714.3 L755.3,711.8 L757.5,708.1 L759.6,704.0 L761.8,699.8 L763.9,695.8 L766.1,692.3 L768.2,689.7 L770.4,688.1 L772.5,687.6 L774.7,688.1 L776.8,689.3 L779.0,691.2 L781.1,693.6 L783.3,696.3 L785.4,699.2 L787.6,702.0 L789.7,704.6 L791.9,706.9 L794.0,705.1 L796.2,702.1 L798.3,698.7 L800.5,695.2 L802.6,691.5 L804.8,688.0 L806.9,684.7 L809.1,681.7 L811.2,679.3 L813.4,677.5 L815.5,676.4 L817.7,676.0 L819.8,676.5 L822.0,678.0 L824.1,680.3 L826.3,683.4 L828.4,687.0 L830.6,690.9 L832.7,695.0 L834.9,699.0 L837.0,702.8 L839.2,706.1 L841.3,706.1 L843.5,701.9 L845.6,697.0 L847.8,691.9 L849.9,686.7 L852.1,681.9 L854.2,677.8 L856.4,674.7 L858.5,672.8 L860.7,672.2 L862.8,673.4 L865.0,676.5 L867.1,681.2 L869.3,687.3 L871.4,694.2 L873.6,701.4 L875.7,708.5 L877.9,715.0 L880.0,720.6 L882.2,715.1 L884.3,708.4 L886.5,701.1 L888.6,693.5 L890.8,686.2 L892.9,679.6 L895.1,674.1 L897.2,670.1 L899.4,668.0 L901.5,667.8 L903.7,669.7 L905.8,673.6 L908.0,679.2 L910.1,685.8 L912.3,692.9 L914.4,700.0 L916.6,706.4 L918.7,710.6 L920.9,703.5 L923.0,695.5 L925.2,686.8 L927.3,677.7 L929.5,668.6 L931.6,660.0 L933.8,652.4 L935.9,646.1 L938.1,641.4 L940.2,638.7 L942.4,638.0 L944.5,638.9 L946.7,640.8 L948.8,643.8 L951.0,647.4 L953.1,651.5 L955.3,655.6 L957.4,659.4 L959.6,662.8 L961.7,661.7 L963.9,658.2 L966.0,654.3 L968.2,650.1 L970.3,646.0 L972.5,642.0 L974.6,638.5 L976.8,635.7 L978.9,633.7 L981.1,632.6 L983.2,632.6 L985.4,633.1 L987.5,633.9 L989.7,634.8 L991.8,635.7 L994.0,633.8 L996.1,631.1 L998.3,628.1 L1000.4,624.9 L1002.6,621.8 L1004.7,618.7 L1006.9,615.9 L1009.0,613.6 L1011.2,611.8 L1013.3,610.6 L1015.5,610.2 L1017.6,609.3" clip-path="url(#c4)" stroke="#a06c00" stroke-width="1" fill="none" shape-rendering="crispEdges"/>
<path d="M612.7,708.5 L616.7,715.5 L608.7,715.5 Z" fill="none" stroke="#a06c00" stroke-width="1"/>
<text x="613.2" y="734" text-anchor="middle" class="t16g">1</text>
<path d="M982.2,630.5 L986.2,623.5 L978.2,623.5 Z" fill="none" stroke="#a06c00" stroke-width="1"/>
<text x="982.7" y="622" text-anchor="middle" class="t16g">3</text>
<path d="M989.6,636.5 L993.6,643.5 L985.6,643.5 Z" fill="none" stroke="#a06c00" stroke-width="1"/>
<text x="990.1" y="662" text-anchor="middle" class="t16g">2</text>
<path d="M989.6,721.5 L992.6,726.5 L986.6,726.5 Z" fill="none" stroke="#a06c00" stroke-width="1"/>
<path d="M586.5,726.5 L581.5,722.5 L581.5,730.5 Z" fill="#a06c00"/>
<path d="M1016.5,726.5 L1021.5,722.5 L1021.5,730.5 Z" fill="#a06c00"/>
</svg>
<div id="rbs" style="position:absolute;left:1031px;top:0;width:250px;height:806px">
<div class="rb" style="top:82px"><div class="lab1">Autoscale</div></div>
<div class="rb" style="top:165.5px"><div class="lab2">Autoscale<br>All</div></div>
<div class="rb empty" style="top:249px"></div>
<div class="rb focus" style="top:332px"><div class="labt">Scale</div><div class="sub"><span class="tx">50 mUnits</span></div></div>
<div class="rb" style="top:415.5px"><div class="labt">Reference Level</div><div class="sub"><span class="tx">1 Units</span></div></div>
<div class="rb" style="top:499px"><div class="labt">Reference Position</div><div class="sub"><span class="tx">0 Div</span></div></div>
<div class="rb" style="top:582px"><div class="labt">Y-Axis Spacing</div><div class="sub lin"><span class="l1"><span class="tx" style="transform:scaleX(0.9)">LINEAR</span></span><span class="l2"><span class="tx">log</span></span></div></div>
<div class="rb" style="top:666px"><div class="labt">Scale Coupling...</div><div class="sub"><span class="tx">Off</span></div></div>
</div>
<svg style="position:absolute;left:0;top:0;pointer-events:none" width="1286" height="806"><text x="204 256 309 368 382 420 459 507.7 552 615 637 671.5 706 746.6 801 838.6 879 915.4 938 974.5 1011" y="366" transform="translate(0,366) scale(1,0.87) translate(0,-366)" style="font-family:'Liberation Serif',serif;font-weight:bold;font-size:70px" fill="rgba(0,0,0,0.085)">www.xahxmicrowave.com</text></svg>
</body></html>
